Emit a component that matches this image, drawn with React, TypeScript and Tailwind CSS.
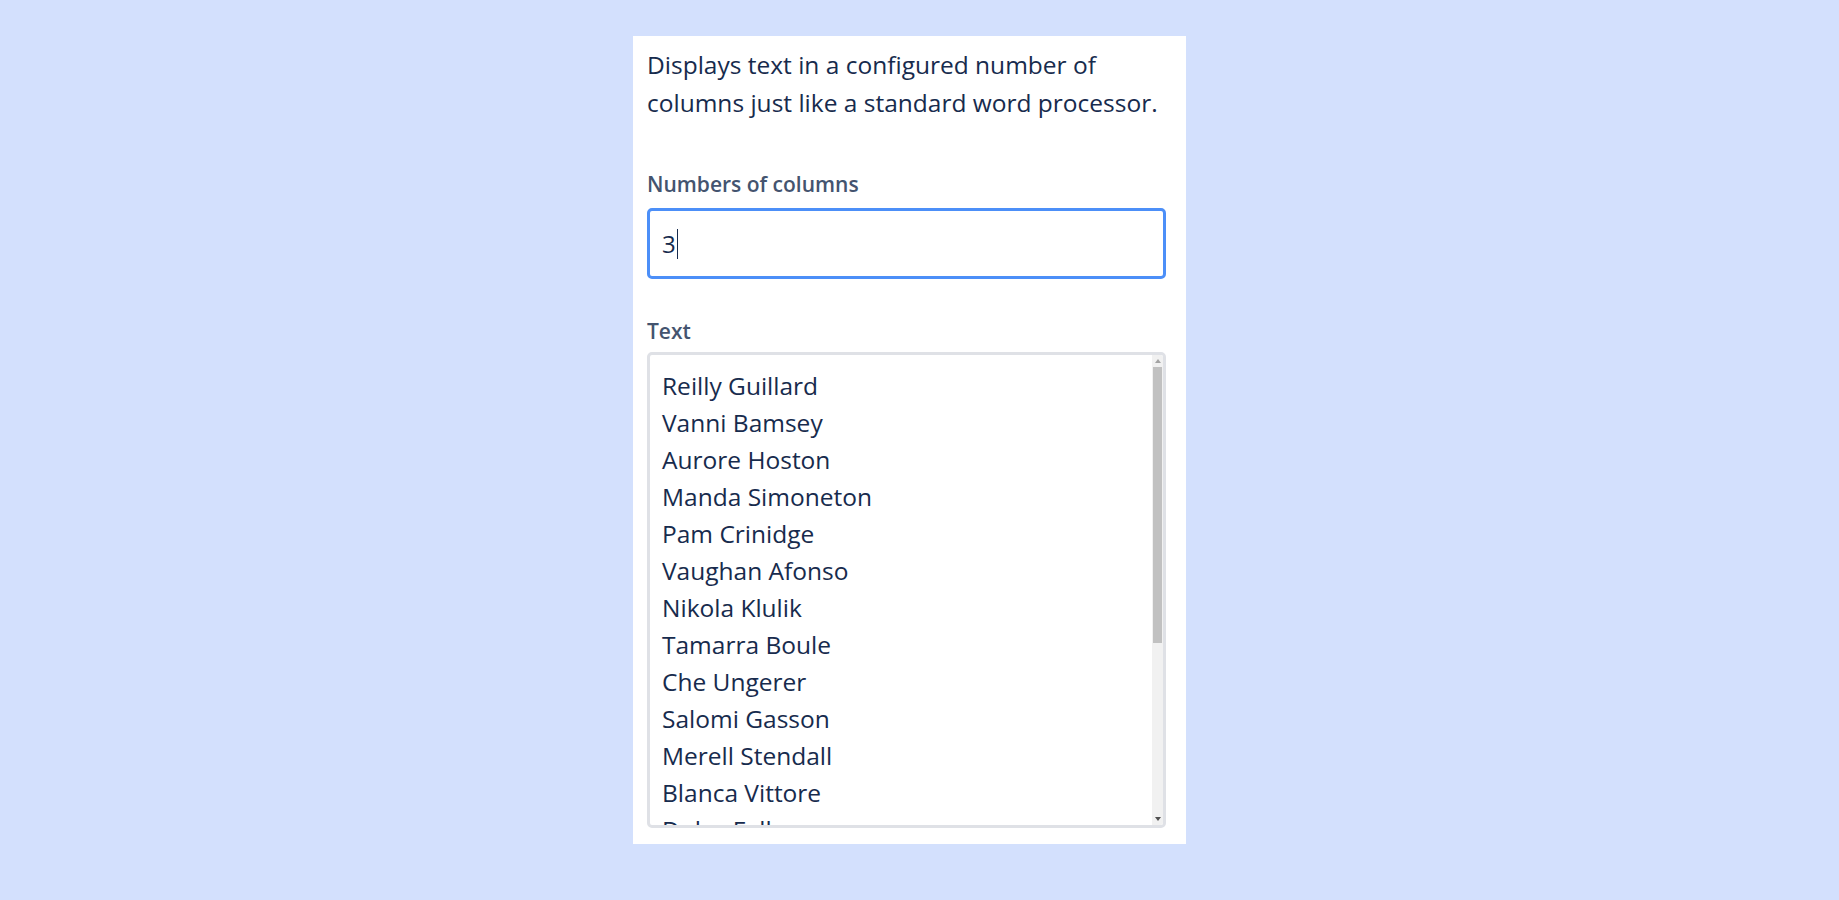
import React from "react";

const names = [
  "Reilly Guillard",
  "Vanni Bamsey",
  "Aurore Hoston",
  "Manda Simoneton",
  "Pam Crinidge",
  "Vaughan Afonso",
  "Nikola Klulik",
  "Tamarra Boule",
  "Che Ungerer",
  "Salomi Gasson",
  "Merell Stendall",
  "Blanca Vittore",
  "Dulce Fellowes",
  "Gerri Marsland",
];

export default function App() {
  return (
    <div
      className="w-full h-[900px] bg-[#d3e0fd] flex justify-center overflow-hidden"
      style={{ fontFamily: '"Open Sans", "Noto Sans", sans-serif' }}
    >
      <div className="mt-[36px] mr-[20px] w-[553px] h-[808px] bg-white pl-[14px] pr-[20px] pt-[10px] pb-[16px] flex flex-col">
        <p className="text-[24.5px] leading-[37.5px] text-[#172b4d]">
          Displays text in a configured number of columns just like a standard word processor.
        </p>
        <label className="mt-[51px] text-[21px] leading-[24px] font-semibold text-[#44546f]">
          Numbers of columns
        </label>
        <div className="mt-[12px] h-[71px] border-[3px] border-[#4c8ff8] rounded-[5px] flex items-center px-[12px]">
          <span className="text-[24px] text-[#172b4d] leading-none">3</span>
          <span className="w-px h-[30px] bg-[#172b4d] ml-[1px]" />
        </div>
        <label className="mt-[40px] text-[21px] leading-[24px] font-semibold text-[#44546f]">
          Text
        </label>
        <div className="mt-[9px] flex-1 border-[3px] border-[#dfe1e6] rounded-[5px] flex overflow-hidden">
          <div className="flex-1 overflow-hidden pt-[12px] pl-[12px]">
            {names.map((n) => (
              <div key={n} className="text-[24.5px] leading-[37px] text-[#172b4d] whitespace-nowrap">
                {n}
              </div>
            ))}
          </div>
          <div className="w-[11px] bg-[#f1f1f1] flex flex-col items-center">
            <div className="h-[12px] w-full flex items-center justify-center">
              <svg width="6" height="4" viewBox="0 0 6 4">
                <path d="M0 4 L3 0 L6 4 Z" fill="#a3a3a3" />
              </svg>
            </div>
            <div className="w-[9px] h-[276px] bg-[#c1c1c1]" />
            <div className="flex-1" />
            <div className="h-[12px] w-full flex items-center justify-center">
              <svg width="6" height="4" viewBox="0 0 6 4">
                <path d="M0 0 L6 0 L3 4 Z" fill="#505050" />
              </svg>
            </div>
          </div>
        </div>
      </div>
    </div>
  );
}
